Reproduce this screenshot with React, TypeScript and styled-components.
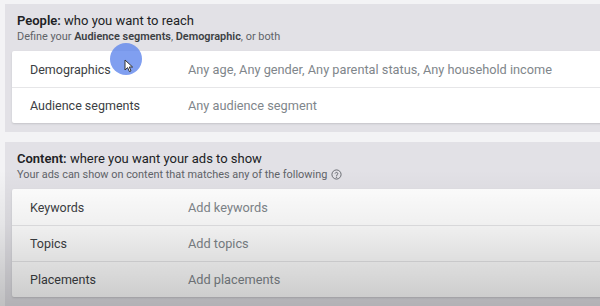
import React from "react";
import styled, { createGlobalStyle } from "styled-components";

const Global = createGlobalStyle`
  html, body { margin: 0; padding: 0; background: #f3f3f5; }
  body { font-family: Roboto, "Noto Sans", Arial, sans-serif; overflow: hidden; }
`;

const Page = styled.div`
  position: relative;
  width: 600px;
  height: 306px;
  overflow: hidden;
  padding: 4px 0 0 5px;
  box-sizing: border-box;
  display: flex;
  flex-direction: column;
  gap: 10px;
`;

const Panel = styled.section<{ $pb: number }>`
  background: #e2e1e6;
  width: 620px;
  padding: 9px 0 ${(p) => p.$pb}px 7px;
  box-sizing: border-box;
  display: flex;
  flex-direction: column;
  flex-shrink: 0;
`;

const Header = styled.div`
  padding-left: 5px;
  display: flex;
  flex-direction: column;
  margin-bottom: 7px;
`;

const Title = styled.div`
  font-size: 13px;
  line-height: 16px;
  color: #202124;
  b { font-weight: 600; }
`;

const Sub = styled.div`
  font-size: 10.9px;
  line-height: 15px;
  color: #5f6368;
  display: flex;
  align-items: center;
  gap: 4px;
  b { font-weight: 600; color: #3c4043; }
`;

const Card = styled.div`
  background: #fff;
  border-radius: 2px 0 0 2px;
  box-shadow: 0 1px 2px rgba(60, 64, 67, 0.18);
`;

const Row = styled.div`
  height: 36px;
  display: flex;
  align-items: center;
  padding-left: 18px;
  border-top: 1px solid #e6e6e8;
  box-sizing: border-box;
  &:first-child { border-top: none; }
`;

const Label = styled.div`
  width: 158px;
  font-size: 12.5px;
  color: #3c4043;
`;

const Value = styled.div`
  font-size: 12.75px;
  color: #80868b;
`;

const Shade = styled.div`
  position: absolute;
  left: 0;
  right: 0;
  top: 170px;
  bottom: 0;
  pointer-events: none;
  background: linear-gradient(to bottom, rgba(0,0,0,0) 0%, rgba(0,0,0,0.06) 40%, rgba(0,0,0,0.21) 100%);
`;

const Cursor = styled.div`
  position: absolute;
  left: 110px;
  top: 43px;
  width: 32px;
  height: 32px;
  border-radius: 50%;
  background: rgba(92, 132, 236, 0.78);
`;

const Arrow = styled.svg`
  position: absolute;
  left: 14px;
  top: 16px;
`;

const HelpIcon = () => (
  <svg width="11" height="11" viewBox="0 0 24 24" fill="none" stroke="#5f6368" strokeWidth="2">
    <circle cx="12" cy="12" r="10" />
    <path d="M9.2 9.2a2.9 2.9 0 0 1 5.6 1c0 2-2.8 2.6-2.8 4.3" strokeLinecap="round" />
    <circle cx="12" cy="17.8" r="0.6" fill="#5f6368" />
  </svg>
);

type RowData = [string, string];

const people: RowData[] = [
  ["Demographics", "Any age, Any gender, Any parental status, Any household income"],
  ["Audience segments", "Any audience segment"],
];
const content: RowData[] = [
  ["Keywords", "Add keywords"],
  ["Topics", "Add topics"],
  ["Placements", "Add placements"],
];

export default function App() {
  return (
    <>
      <Global />
      <Page>
        <Panel $pb={9}>
          <Header>
            <Title><b>People:</b> who you want to reach</Title>
            <Sub><span>Define your <b>Audience segments</b>, <b>Demographic</b>, or both</span></Sub>
          </Header>
          <Card>
            {people.map(([l, v]) => (
              <Row key={l}><Label>{l}</Label><Value>{v}</Value></Row>
            ))}
          </Card>
        </Panel>
        <Panel $pb={10}>
          <Header>
            <Title><b>Content:</b> where you want your ads to show</Title>
            <Sub><span>Your ads can show on content that matches any of the following</span><HelpIcon /></Sub>
          </Header>
          <Card>
            {content.map(([l, v]) => (
              <Row key={l}><Label>{l}</Label><Value>{v}</Value></Row>
            ))}
          </Card>
        </Panel>
        <Shade />
        <Cursor>
          <Arrow width="10" height="14" viewBox="0 0 10 14">
            <path d="M1 1 L1 11 L3.6 8.6 L5.4 12.6 L7 11.9 L5.3 8 L8.6 8 Z" fill="#fff" stroke="#333" strokeWidth="1" strokeLinejoin="round" />
          </Arrow>
        </Cursor>
      </Page>
    </>
  );
}
